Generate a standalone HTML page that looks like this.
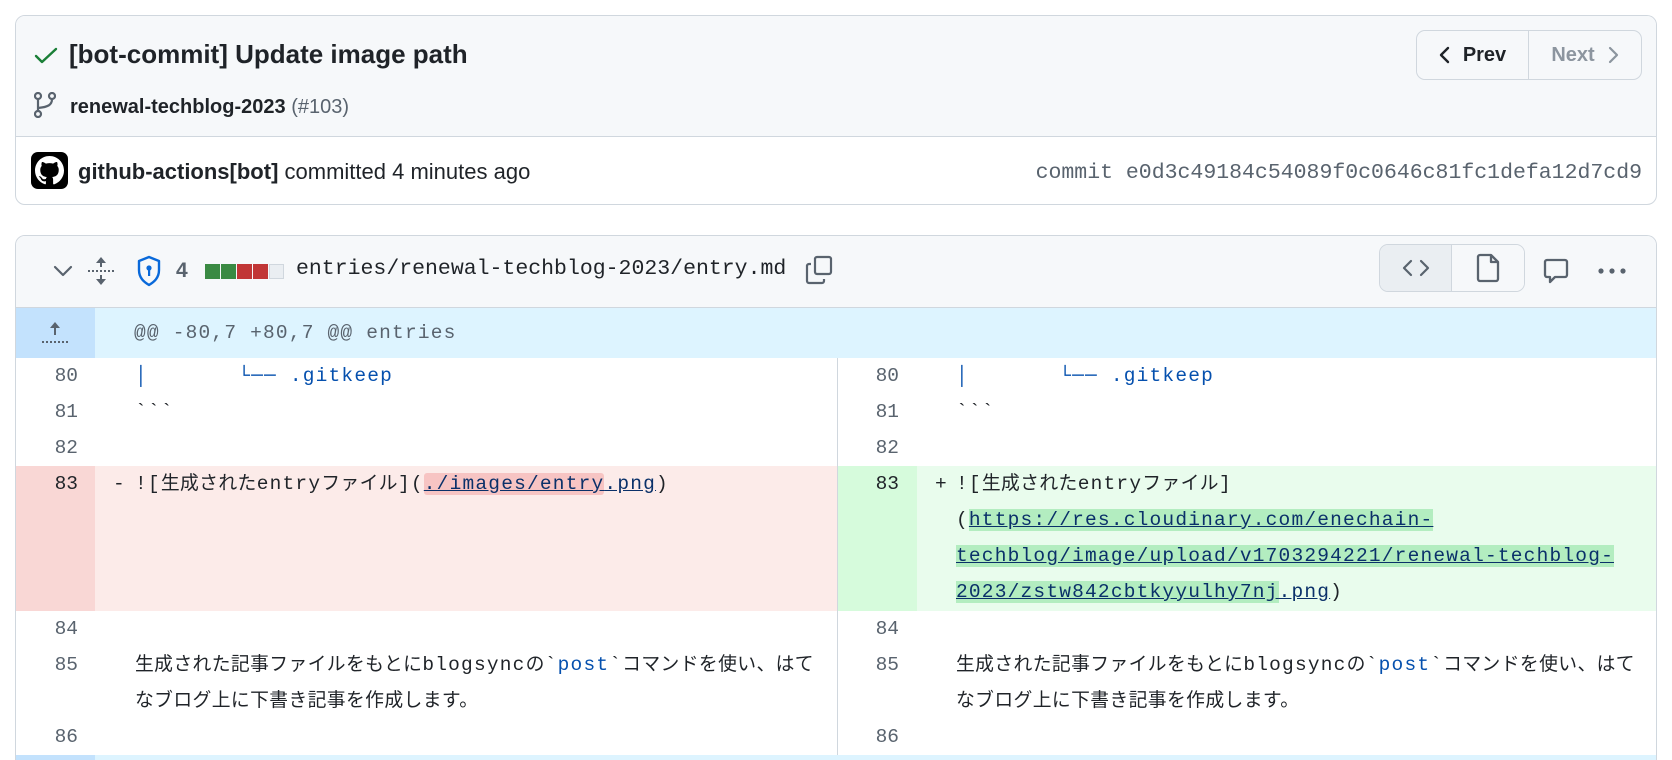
<!DOCTYPE html>
<html><head><meta charset="utf-8"><style>
*{box-sizing:border-box;margin:0;padding:0}
html,body{width:1672px;height:760px;overflow:hidden}
body{background:#fff;font-family:"Liberation Sans","Noto Sans CJK JP",sans-serif;color:#1f2328;position:relative}
.abs{position:absolute}
.box1{left:15px;top:15px;width:1642px;height:190px;border:1px solid #d0d7de;border-radius:10px;overflow:hidden}
.box1 .hd{position:absolute;left:0;top:0;right:0;height:121px;background:#f6f8fa;border-bottom:1px solid #d0d7de}
.title{left:53px;top:23px;font-size:26px;font-weight:bold;white-space:nowrap}
.branch{left:54px;top:80px;font-size:20px;font-weight:bold;white-space:nowrap}
.branch span{font-weight:normal;color:#59636e}
.author{left:62px;top:143px;font-size:22px;white-space:nowrap}
.mono{font-family:"Liberation Mono","Noto Sans CJK JP",monospace}
.hash{right:14px;top:145px;font-size:21.5px;color:#59636e;white-space:nowrap}
.nav{right:14px;top:14px;width:226px;height:50px;border:1px solid #d0d7de;border-radius:9px;display:flex;font-size:20px;font-weight:bold;background:#f6f8fa}
.nav div{display:flex;align-items:center;justify-content:center;gap:12px}
.box2{left:15px;top:235px;width:1642px;height:600px;border:1px solid #d0d7de;border-radius:10px;overflow:hidden}
.fh{position:absolute;left:0;top:0;right:0;height:72px;background:#f6f8fa;border-bottom:1px solid #d0d7de}
.row{position:absolute;left:0;right:0;height:36px;font-family:"Liberation Mono","Noto Sans CJK JP",monospace;font-size:19.5px;letter-spacing:1.2px;white-space:nowrap}
.num{position:absolute;top:0;width:79px;text-align:right;padding-right:17px;line-height:36px;color:#59636e;font-size:19.5px;letter-spacing:0}
.code{position:absolute;top:0;line-height:36px;white-space:pre}
.j{font-size:18.8px;letter-spacing:0.4px}
.bl{color:#0550ae}
.nv{color:#0a3069;text-decoration:underline}
.mk{position:absolute;top:0;line-height:36px}
</style></head><body>

<div class="abs box1">
  <div class="hd"></div>
  <svg class="abs" style="left:18px;top:31px" width="24" height="18" viewBox="0 0 24 18"><path d="M2 9l6 6L22 2" stroke="#1a7f37" stroke-width="2.4" fill="none" stroke-linecap="round" stroke-linejoin="round"/></svg>
  <div class="abs title">[bot-commit] Update image path</div>
  <svg class="abs" style="left:18px;top:76px" width="22" height="26" viewBox="0 0 22 26" fill="none" stroke="#59636e" stroke-width="2.2"><circle cx="4" cy="4" r="3"/><circle cx="4" cy="22" r="3"/><circle cx="18" cy="4" r="3"/><path d="M4 7v12M18 7c0 6-4 8-14 9"/></svg>
  <div class="abs branch">renewal-techblog-2023 <span>(#103)</span></div>
  <div class="abs" style="left:15px;top:136px;width:37px;height:37px;background:#000;border-radius:7px"></div>
  <svg class="abs" style="left:19px;top:140px" width="29" height="29" viewBox="0 0 16 16"><path fill="#fff" d="M8 0C3.580 0 0 3.58 0 8c0 3.54 2.290 6.53 5.470 7.59.4.07.55-.17.55-.38v-1.33c-2.23.48-2.7-1.07-2.7-1.07-.36-.92-.89-1.17-.89-1.17-.73-.5.05-.49.05-.49.8.06 1.23.83 1.23.83.71 1.23 1.87.87 2.33.67.07-.52.28-.87.51-1.07-1.78-.2-3.65-.89-3.65-3.95 0-.87.31-1.59.82-2.15-.08-.2-.36-1.02.08-2.12 0 0 .67-.21 2.2.82a7.6 7.6 0 014 0c1.53-1.04 2.2-.82 2.2-.82.44 1.1.16 1.92.08 2.12.51.56.82 1.27.82 2.15 0 3.07-1.870 3.75-3.65 3.95.29.25.54.73.54 1.48v2.2c0 .21.15.46.55.38A8.01 8.01 0 0016 8c0-4.42-3.58-8-8-8z"/></svg>
  <div class="abs author"><b>github-actions[bot]</b> committed 4 minutes ago</div>
  <div class="abs hash mono">commit e0d3c49184c54089f0c0646c81fc1defa12d7cd9</div>
  <div class="abs nav">
    <div style="width:112px;border-right:1px solid #d0d7de;background:#f6f8fa;border-radius:9px 0 0 9px"><svg width="12" height="18" viewBox="0 0 12 18"><path d="M9 2L2 9l7 7" stroke="#1f2328" stroke-width="2.4" fill="none" stroke-linecap="round" stroke-linejoin="round"/></svg>Prev</div>
    <div style="flex:1;color:#8c959f">Next<svg width="12" height="18" viewBox="0 0 12 18"><path d="M3 2l7 7-7 7" stroke="#8c959f" stroke-width="2.2" fill="none" stroke-linecap="round" stroke-linejoin="round"/></svg></div>
  </div>
</div>

<div class="abs box2">
  <div class="fh"></div>
  <svg class="abs" style="left:37px;top:28px" width="20" height="14" viewBox="0 0 20 14"><path d="M2 3l8 8 8-8" stroke="#59636e" stroke-width="2.2" fill="none" stroke-linecap="round" stroke-linejoin="round"/></svg>
  <svg class="abs" style="left:71px;top:20px" width="28" height="30" viewBox="0 0 28 30" fill="#59636e"><path d="M14 1l-5 6h10zM14 29l-5-6h10z"/><rect x="13" y="6" width="2" height="5"/><rect x="13" y="19" width="2" height="5"/><g><rect x="1" y="14" width="2" height="2"/><rect x="5" y="14" width="2" height="2"/><rect x="9" y="14" width="2" height="2"/><rect x="13" y="14" width="2" height="2"/><rect x="17" y="14" width="2" height="2"/><rect x="21" y="14" width="2" height="2"/><rect x="25" y="14" width="2" height="2"/></g></svg>
  <svg class="abs" style="left:120px;top:19px" width="26" height="32" viewBox="0 0 26 32"><path d="M13 2L3 6v9c0 8 5 12 10 15 5-3 10-7 10-15V6z" stroke="#0969da" stroke-width="2.4" fill="none" stroke-linejoin="round"/><circle cx="13" cy="13" r="2.6" fill="#0969da"/><rect x="12" y="14" width="2.2" height="7" fill="#0969da"/></svg>
  <div class="abs" style="left:160px;top:23px;font-size:21px;font-weight:bold;color:#59636e">4</div>
  <div class="abs" style="left:189px;top:28px;width:15px;height:15px;background:#3a8a43"></div>
  <div class="abs" style="left:205px;top:28px;width:15px;height:15px;background:#3a8a43"></div>
  <div class="abs" style="left:221px;top:28px;width:15px;height:15px;background:#c13636"></div>
  <div class="abs" style="left:237px;top:28px;width:15px;height:15px;background:#c13636"></div>
  <div class="abs" style="left:253px;top:28px;width:15px;height:15px;background:#eaeef2;border:1px solid #d0d7de"></div>
  <div class="abs mono" style="left:280px;top:21px;font-size:21.5px;white-space:nowrap">entries/renewal-techblog-2023/entry.md</div>
  <svg class="abs" style="left:789px;top:19px" width="28" height="30" viewBox="0 0 28 30" fill="none" stroke="#59636e" stroke-width="2.2" stroke-linejoin="round"><rect x="10" y="2" width="16" height="17" rx="2"/><path d="M6 9H4a2 2 0 00-2 2v15a2 2 0 002 2h13a2 2 0 002-2v-2"/></svg>
  <div class="abs" style="left:1363px;top:8px;width:146px;height:48px;border:1px solid #d0d7de;border-radius:9px;overflow:hidden;display:flex">
    <div style="width:72px;background:#eaeef2;border-right:1px solid #d0d7de;display:flex;align-items:center;justify-content:center"><svg width="28" height="18" viewBox="0 0 28 18"><path d="M9 2L2 9l7 7M19 2l7 7-7 7" stroke="#59636e" stroke-width="2.2" fill="none" stroke-linecap="round" stroke-linejoin="round"/></svg></div>
    <div style="flex:1;background:#f6f8fa;display:flex;align-items:center;justify-content:center"><svg width="24" height="30" viewBox="0 0 24 30"><path d="M4 2h11l7 7v17a2 2 0 01-2 2H4a2 2 0 01-2-2V4a2 2 0 012-2zM15 2v7h7" stroke="#59636e" stroke-width="2.3" fill="none" stroke-linejoin="round"/></svg></div>
  </div>
  <svg class="abs" style="left:1527px;top:22px" width="26" height="28" viewBox="0 0 26 28"><path d="M4 2h18a2 2 0 012 2v13a2 2 0 01-2 2H12l-5 5v-5H4a2 2 0 01-2-2V4a2 2 0 012-2z" stroke="#59636e" stroke-width="2.3" fill="none" stroke-linejoin="round"/></svg>
  <svg class="abs" style="left:1581px;top:31px" width="30" height="8" viewBox="0 0 30 8" fill="#59636e"><circle cx="4" cy="4" r="2.6"/><circle cx="15" cy="4" r="2.6"/><circle cx="26" cy="4" r="2.6"/></svg>

  <div class="row" style="top:72px;height:50px;background:#ddf4ff">
    <div style="position:absolute;left:0;top:0;width:79px;height:50px;background:#c3e2fd"></div>
    <svg class="abs" style="left:25px;top:13px" width="28" height="24" viewBox="0 0 28 24" fill="#59636e"><path d="M14 1l-5 6h10z"/><rect x="13" y="6" width="2" height="8"/><rect x="1" y="20" width="2" height="2"/><rect x="5" y="20" width="2" height="2"/><rect x="9" y="20" width="2" height="2"/><rect x="13" y="20" width="2" height="2"/><rect x="17" y="20" width="2" height="2"/><rect x="21" y="20" width="2" height="2"/><rect x="25" y="20" width="2" height="2"/></svg>
    <div class="code" style="left:118px;top:3px;line-height:44px;color:#59636e">@@ -80,7 +80,7 @@ entries</div>
  </div>

  <div style="position:absolute;left:821px;top:122px;width:1px;height:420px;background:#d0d7de"></div>

  <div class="row" style="top:122px"><div class="num" style="left:0">80</div><div class="code" style="left:119px"><span class="bl">│       └── .gitkeep</span></div><div class="num" style="left:821px">80</div><div class="code" style="left:940px"><span class="bl">│       └── .gitkeep</span></div></div>
  <div class="row" style="top:158px"><div class="num" style="left:0">81</div><div class="code" style="left:119px">&#96;&#96;&#96;</div><div class="num" style="left:821px">81</div><div class="code" style="left:940px">&#96;&#96;&#96;</div></div>
  <div class="row" style="top:194px"><div class="num" style="left:0">82</div><div class="num" style="left:821px">82</div></div>

  <div class="row" style="top:230px;height:145px">
    <div style="position:absolute;left:0;top:0;width:79px;height:145px;background:#f9d7d5"></div>
    <div style="position:absolute;left:79px;top:0;width:742px;height:145px;background:#fcebe9"></div>
    <div style="position:absolute;left:822px;top:0;width:79px;height:145px;background:#d6fbdc"></div>
    <div style="position:absolute;left:901px;top:0;right:0;height:145px;background:#e9fced"></div>
    <div class="num" style="left:0;color:#1f2328">83</div>
    <div class="mk" style="left:97px">-</div>
    <div class="code" style="left:119px">![<span class="j">生成された</span>entry<span class="j">ファイル</span>](<span class="nv"><span style="background:#f7c4c3;border-radius:3px">./images/entry</span>.png</span>)</div>
    <div class="num" style="left:821px;color:#1f2328">83</div>
    <div class="mk" style="left:919px">+</div>
    <div class="code" style="left:940px">![<span class="j">生成された</span>entry<span class="j">ファイル</span>]</div>
    <div class="code" style="left:940px;top:36px">(<span class="nv" style="background:#b3edc0">https://res.cloudinary.com/enechain-</span></div>
    <div class="code" style="left:940px;top:72px"><span class="nv" style="background:#b3edc0">techblog/image/upload/v1703294221/renewal-techblog-</span></div>
    <div class="code" style="left:940px;top:108px"><span class="nv"><span style="background:#b3edc0">2023/zstw842cbtkyyulhy7nj</span>.png</span>)</div>
  </div>

  <div class="row" style="top:375px"><div class="num" style="left:0">84</div><div class="num" style="left:821px">84</div></div>
  <div class="row" style="top:411px;height:72px">
    <div class="num" style="left:0">85</div>
    <div class="code" style="left:119px"><span class="j">生成された記事ファイルをもとに</span>blogsync<span class="j">の</span>&#96;<span class="bl">post</span>&#96;<span class="j">コマンドを使い、はて</span></div>
    <div class="code" style="left:119px;top:36px"><span class="j">なブログ上に下書き記事を作成します。</span></div>
    <div class="num" style="left:821px">85</div>
    <div class="code" style="left:940px"><span class="j">生成された記事ファイルをもとに</span>blogsync<span class="j">の</span>&#96;<span class="bl">post</span>&#96;<span class="j">コマンドを使い、はて</span></div>
    <div class="code" style="left:940px;top:36px"><span class="j">なブログ上に下書き記事を作成します。</span></div>
  </div>
  <div class="row" style="top:483px"><div class="num" style="left:0">86</div><div class="num" style="left:821px">86</div></div>
  <div class="row" style="top:519px;height:80px;background:#ddf4ff"><div style="position:absolute;left:0;top:0;width:79px;height:80px;background:#c3e2fd"></div></div>
</div>
</body></html>
